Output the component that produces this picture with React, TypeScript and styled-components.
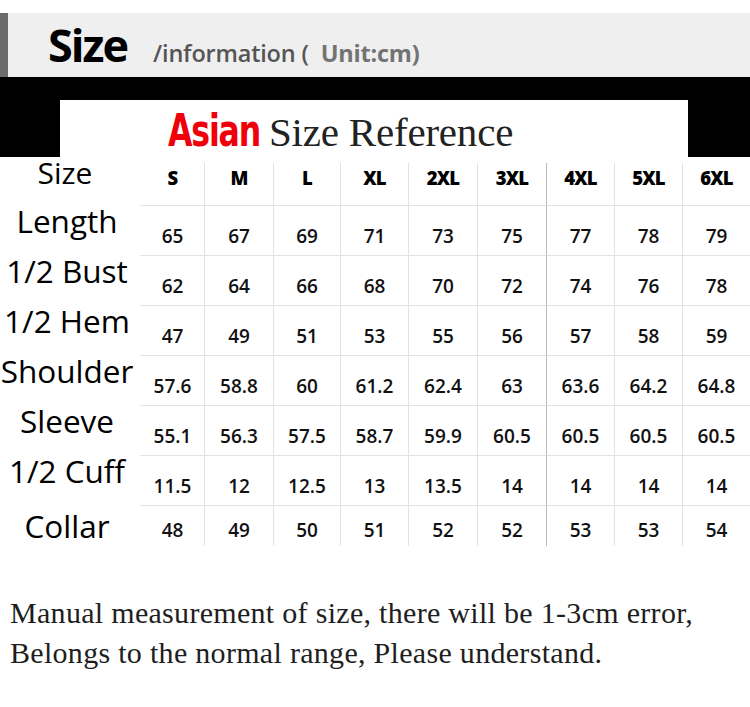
import React from "react";
import styled, { createGlobalStyle } from "styled-components";

const Global = createGlobalStyle`
  html, body { margin: 0; padding: 0; background: #ffffff; }
  body { width: 750px; overflow: hidden; }
`;

const Page = styled.div`
  width: 750px;
  padding-top: 13px;
  background: #ffffff;
`;

const HeaderBar = styled.header`
  height: 64px;
  box-sizing: border-box;
  background: #efefef;
  border-left: 8px solid #6b6b6b;
  padding-left: 40px;
  display: flex;
  align-items: baseline;
  line-height: 64px;
  font-family: "Open Sans", "Liberation Sans", sans-serif;
`;

const HeaderTitle = styled.h1`
  margin: 0;
  font-size: 45px;
  font-weight: 700;
  color: #000;
  letter-spacing: -2px;
`;

const HeaderSub = styled.span`
  margin-left: 26px;
  font-size: 23.5px;
  font-weight: 600;
  color: #555;
  letter-spacing: -0.2px;
`;

const Unit = styled.span`
  margin-left: 12px;
  color: #737373;
  font-weight: 700;
`;

const Band = styled.div`
  height: 80px;
  box-sizing: border-box;
  background: #000;
  padding: 23px 62px 0 60px;
  display: flex;
`;

const Panel = styled.div`
  flex: 1;
  background: #fff;
  padding-left: 108px;
  display: flex;
  align-items: baseline;
  line-height: 62px;
`;

const Red = styled.span`
  display: inline-block;
  font-family: "DejaVu Sans Condensed", "Liberation Sans", sans-serif;
  font-weight: 700;
  font-size: 45px;
  color: #f0000a;
  letter-spacing: -1.5px;
  transform: scaleX(0.78);
  transform-origin: left center;
  margin-right: -26px;
`;

const SerifTitle = styled.span`
  margin-left: 9px;
  font-family: "Liberation Serif", "DejaVu Serif", serif;
  font-size: 41px;
  color: #222;
  letter-spacing: -0.2px;
`;

const COLS = "140px 64px 69px 67px 68px 69px 69px 68px 68px 68px";

const Row = styled.div<{ $h: number }>`
  display: grid;
  grid-template-columns: ${COLS};
  height: ${(p) => p.$h}px;
`;

const Label = styled.div<{ $shift: number }>`
  display: flex;
  align-items: center;
  justify-content: center;
  padding-right: 6px;
  padding-bottom: ${(p) => p.$shift}px;
  font-family: "Open Sans", "Liberation Sans", sans-serif;
  font-size: 31.5px;
  color: #000;
  white-space: nowrap;
  line-height: 1;
`;

const HeadLabel = styled(Label)`
  font-size: 30px;
  padding-right: 10px;
`;

const lineColor = (i: number) => (i === 6 ? "#b8b8b8" : "#e2e2e2");

const SizeCell = styled.div<{ $i: number }>`
  margin-top: 6px;
  display: flex;
  align-items: center;
  justify-content: center;
  padding-bottom: 12px;
  border-left: 1px solid ${(p) => (p.$i === 0 ? "transparent" : lineColor(p.$i))};
  font-family: "Open Sans", "Liberation Sans", sans-serif;
  font-size: 18.5px;
  font-weight: 800;
  color: #000;
  letter-spacing: -0.8px;
  line-height: 1;
`;

const Value = styled.div<{ $i: number; $pad: number }>`
  display: flex;
  align-items: center;
  justify-content: center;
  padding-top: ${(p) => p.$pad}px;
  border-top: 1px solid #e2e2e2;
  border-left: 1px solid ${(p) => (p.$i === 0 ? "transparent" : lineColor(p.$i))};
  font-family: "Open Sans", "Liberation Sans", sans-serif;
  font-size: 19px;
  font-weight: 600;
  color: #111;
  line-height: 1;
`;

const Note = styled.p`
  margin: 47px 0 0;
  padding-left: 10px;
  font-family: "Liberation Serif", "DejaVu Serif", serif;
  font-size: 30px;
  line-height: 40px;
  color: #1e1e1e;
  letter-spacing: 0.3px;
  white-space: nowrap;
`;

const sizes = ["S", "M", "L", "XL", "2XL", "3XL", "4XL", "5XL", "6XL"];

const rows: { label: string; values: string[] }[] = [
  { label: "Length", values: ["65", "67", "69", "71", "73", "75", "77", "78", "79"] },
  { label: "1/2 Bust", values: ["62", "64", "66", "68", "70", "72", "74", "76", "78"] },
  { label: "1/2 Hem", values: ["47", "49", "51", "53", "55", "56", "57", "58", "59"] },
  { label: "Shoulder", values: ["57.6", "58.8", "60", "61.2", "62.4", "63", "63.6", "64.2", "64.8"] },
  { label: "Sleeve", values: ["55.1", "56.3", "57.5", "58.7", "59.9", "60.5", "60.5", "60.5", "60.5"] },
  { label: "1/2 Cuff", values: ["11.5", "12", "12.5", "13", "13.5", "14", "14", "14", "14"] },
  { label: "Collar", values: ["48", "49", "50", "51", "52", "52", "53", "53", "54"] },
];

export default function App() {
  return (
    <Page>
      <Global />
      <HeaderBar>
        <HeaderTitle>Size</HeaderTitle>
        <HeaderSub>
          /information (<Unit>Unit:cm)</Unit>
        </HeaderSub>
      </HeaderBar>
      <Band>
        <Panel>
          <Red>Asian</Red>
          <SerifTitle>Size Reference</SerifTitle>
        </Panel>
      </Band>
      <div>
        <Row $h={48}>
          <HeadLabel $shift={16}>Size</HeadLabel>
          {sizes.map((s, i) => (
            <SizeCell key={s} $i={i}>
              {s}
            </SizeCell>
          ))}
        </Row>
        {rows.map((r, ri) => {
          const last = ri === rows.length - 1;
          return (
            <Row key={r.label} $h={last ? 41 : 50}>
              <Label $shift={last ? 0 : 20}>{r.label}</Label>
              {r.values.map((v, i) => (
                <Value key={i} $i={i} $pad={last ? 9 : 10}>
                  {v}
                </Value>
              ))}
            </Row>
          );
        })}
      </div>
      <Note>
        Manual measurement of size, there will be 1-3cm error,
        <br />
        Belongs to the normal range, Please understand.
      </Note>
    </Page>
  );
}
